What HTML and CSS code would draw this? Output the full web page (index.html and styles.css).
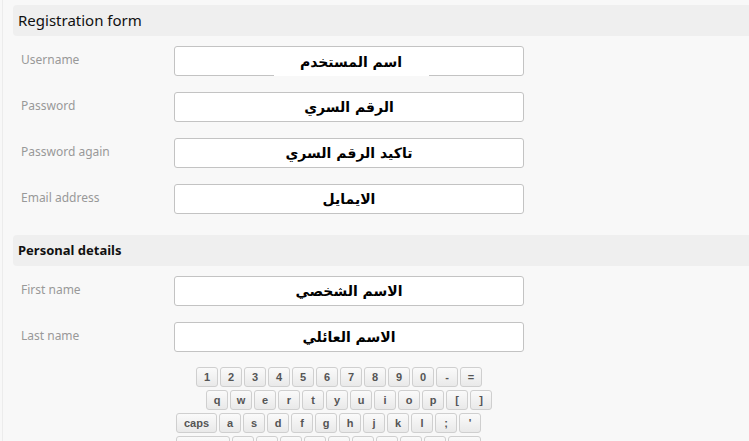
FILE: index.html
```html
<!DOCTYPE html>
<html lang="en">
<head>
<meta charset="utf-8">
<link rel="stylesheet" href="styles.css">
</head>
<body>
<div class="page">
  <form class="form">
    <h2 class="section-title">Registration form</h2>
    <div class="row">
      <label class="label">Username</label>
      <div class="field"><span class="ph ph-cover" dir="rtl">اسم المستخدم</span></div>
    </div>
    <div class="row">
      <label class="label">Password</label>
      <div class="field"><span class="ph" dir="rtl">الرقم السري</span></div>
    </div>
    <div class="row">
      <label class="label">Password again</label>
      <div class="field"><span class="ph" dir="rtl">تاكيد الرقم السري</span></div>
    </div>
    <div class="row">
      <label class="label">Email address</label>
      <div class="field"><span class="ph" dir="rtl">الايمايل</span></div>
    </div>

    <h3 class="section-title section-title-small">Personal details</h3>
    <div class="row">
      <label class="label">First name</label>
      <div class="field"><span class="ph" dir="rtl">الاسم الشخصي</span></div>
    </div>
    <div class="row">
      <label class="label">Last name</label>
      <div class="field"><span class="ph" dir="rtl">الاسم العائلي</span></div>
    </div>

    <div class="keyboard">
      <div class="krow krow-1">
        <span class="key">1</span><span class="key">2</span><span class="key">3</span><span class="key">4</span><span class="key">5</span><span class="key">6</span><span class="key">7</span><span class="key">8</span><span class="key">9</span><span class="key">0</span><span class="key">-</span><span class="key">=</span>
      </div>
      <div class="krow krow-2">
        <span class="key">q</span><span class="key">w</span><span class="key">e</span><span class="key">r</span><span class="key">t</span><span class="key">y</span><span class="key">u</span><span class="key">i</span><span class="key">o</span><span class="key">p</span><span class="key">[</span><span class="key">]</span>
      </div>
      <div class="krow krow-3">
        <span class="key key-caps">caps</span><span class="key">a</span><span class="key">s</span><span class="key">d</span><span class="key">f</span><span class="key">g</span><span class="key">h</span><span class="key">j</span><span class="key">k</span><span class="key">l</span><span class="key">;</span><span class="key">'</span>
      </div>
      <div class="krow krow-4">
        <span class="key key-shift">shift</span><span class="key">z</span><span class="key">x</span><span class="key">c</span><span class="key">v</span><span class="key">b</span><span class="key">n</span><span class="key">m</span><span class="key">,</span><span class="key">.</span><span class="key key-wide">shift</span>
      </div>
    </div>
  </form>
</div>
</body>
</html>
```
FILE: styles.css
```css
html, body {
  margin: 0;
  padding: 0;
  background: #f8f8f8;
  overflow: hidden;
}
.page {
  margin-left: 2px;
  border-left: 1px solid #ececec;
  padding: 5px 0 0 10px;
  min-height: 441px;
  box-sizing: border-box;
}
.form {
  display: flex;
  flex-direction: column;
}
.section-title {
  margin: 0;
  height: 31px;
  line-height: 31px;
  padding-left: 5px;
  background: #efefef;
  border-radius: 4px 0 0 4px;
  font-family: "Noto Sans", "DejaVu Sans", sans-serif;
  font-weight: normal;
  font-size: 15px;
  color: #111;
}
.section-title-small {
  margin-top: 15px;
  font-size: 13px;
  font-weight: bold;
}
.row {
  display: flex;
  align-items: center;
  height: 30px;
  margin-top: 10px;
  margin-bottom: 6px;
}
.label {
  width: 161px;
  padding-left: 8px;
  box-sizing: border-box;
  font-family: "Noto Sans", "DejaVu Sans", sans-serif;
  font-size: 12px;
  color: #999;
  margin-top: -4px;
}
.field {
  width: 350px;
  height: 30px;
  box-sizing: border-box;
  border: 1px solid #c3c3c3;
  border-radius: 3px;
  background: #fff;
  display: flex;
  justify-content: center;
  align-items: center;
}
.ph {
  font-family: "DejaVu Sans", sans-serif;
  font-weight: bold;
  font-size: 14px;
  color: #000;
}
.ph-cover {
  align-self: stretch;
  display: flex;
  align-items: center;
  justify-content: center;
  width: 155px;
  margin-bottom: -1px;
  margin-left: 4px;
  background: #fff;
  position: relative;
}
.keyboard {
  margin-top: 9px;
  margin-left: 163px;
  display: flex;
  flex-direction: column;
  gap: 3px;
}
.krow {
  display: flex;
  gap: 2px;
}
.krow-1 { padding-left: 20px; }
.krow-2 { padding-left: 30px; }
.krow-3 { padding-left: 0; }
.krow-4 { padding-left: 0; }
.key {
  width: 22px;
  height: 20px;
  box-sizing: border-box;
  border: 1px solid #cfcfcf;
  border-radius: 3px;
  background: linear-gradient(#fafafa, #e9e9e9);
  font-family: "Liberation Sans", Arial, sans-serif;
  font-weight: bold;
  font-size: 11px;
  color: #555;
  display: flex;
  align-items: center;
  justify-content: center;
}
.key-caps { width: 41px; }
.key-shift { width: 54px; }
.key-wide { width: 33px; }
```
